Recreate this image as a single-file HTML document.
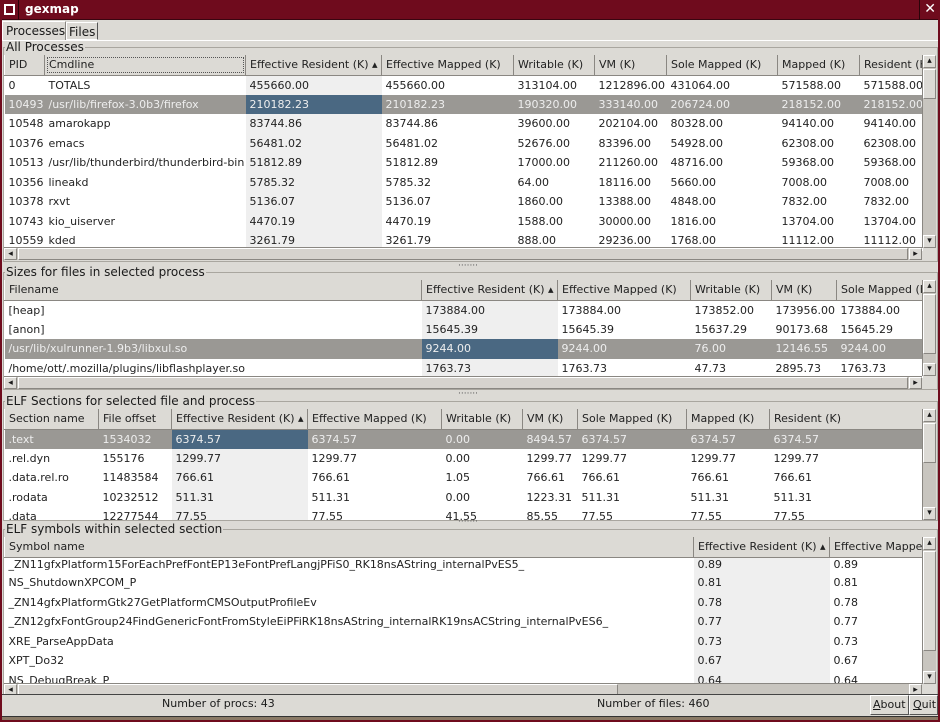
<!DOCTYPE html>
<html><head><meta charset="utf-8"><style>
*{box-sizing:border-box;margin:0;padding:0}
body{width:940px;height:722px;background:#dcdad5;font-family:"DejaVu Sans","Liberation Sans",sans-serif;font-size:11px;color:#1a1a1a;position:relative;overflow:hidden}
.abs{position:absolute}
.title{left:0;top:0;width:940px;height:20px;background:#6f0b1d;color:#fff;font-weight:bold;font-size:12px;border-bottom:1px solid #3a0510}
.frame{left:0;top:0;width:940px;height:722px;border:2px solid #6f0b1d;border-top:none;pointer-events:none}
.grp{border:1px solid #a9a69f;}
.lbl{background:#dcdad5;padding:0 1px;line-height:12px}
table{border-collapse:collapse;table-layout:fixed;position:absolute;background:#fff}
td{height:19.5px;padding:0 0 0 4px;white-space:nowrap;overflow:hidden;color:#222}
th{height:20px;font-weight:normal;text-align:left;padding:0 0 0 4px;white-space:nowrap;overflow:hidden;background:#dcdad5;border-left:1px solid #fff;border-right:1px solid #8a8782;border-bottom:1px solid #8a8782;color:#222}
.s{background:#efefef}
tr.sel td{background:#9a9894;color:#eee}
tr.sel td.s{background:#4a6882}
tr.first td{height:16px;vertical-align:top;line-height:13px}
.vs{background:#c8c5bf;border-left:1px solid #8a8782}
.hs{background:#c8c5bf;border-top:1px solid #8a8782}
.btn{background:#dcdad5;border:1px solid #8a8782;border-top-color:#fff;border-left-color:#fff;font-size:9px;text-align:center;line-height:10px}
.dots{font-size:9px;letter-spacing:0;color:#555;line-height:6px}
</style></head><body>
<div class="abs title"><span class="abs" style="left:4px;top:4px;width:11px;height:11px;border:2px solid #fff"></span><span class="abs" style="left:18px;top:0;height:20px;border-left:1px solid #2a0309"></span><span class="abs" style="left:25px;top:2px">gexmap</span><span class="abs" style="right:4px;top:1px;font-size:14px">✕</span><span class="abs" style="right:20px;top:0;height:20px;border-left:1px solid #2a0309"></span></div>

<!-- tabs -->
<div class="abs" style="left:2px;top:21px;width:64px;height:20px;border:1px solid #fff;border-bottom:none;border-right:1px solid #8a8782;padding:2px 3px;font-size:12px">Processes</div>
<div class="abs" style="left:66px;top:22px;width:32px;height:18px;border:1px solid #fff;border-right:1px solid #555;padding:2px 2px;font-size:12px">Files</div>
<div class="abs" style="left:2px;top:40px;width:936px;border-top:1px solid #fff"></div>

<!-- Group 1 -->
<div class="abs grp" style="left:3px;top:47px;width:935px;height:215px"></div>
<div class="abs lbl" style="left:5px;top:41px;font-size:12px">All Processes</div>
<table style="left:4px;top:55px;width:918px">
<colgroup><col style="width:40px"><col style="width:201px"><col style="width:136px"><col style="width:132px"><col style="width:81px"><col style="width:72px"><col style="width:111px"><col style="width:82px"><col style="width:63px"></colgroup>
<tr><th>PID</th><th style="outline:1px dotted #555;outline-offset:-3px">Cmdline</th><th>Effective Resident (K) ▴</th><th>Effective Mapped (K)</th><th>Writable (K)</th><th>VM (K)</th><th>Sole Mapped (K)</th><th>Mapped (K)</th><th>Resident (K)</th></tr>
<tr><td>0</td><td>TOTALS</td><td class="s">455660.00</td><td>455660.00</td><td>313104.00</td><td>1212896.00</td><td>431064.00</td><td>571588.00</td><td>571588.00</td></tr>
<tr class="sel"><td>10493</td><td>/usr/lib/firefox-3.0b3/firefox</td><td class="s">210182.23</td><td>210182.23</td><td>190320.00</td><td>333140.00</td><td>206724.00</td><td>218152.00</td><td>218152.00</td></tr>
<tr><td>10548</td><td>amarokapp</td><td class="s">83744.86</td><td>83744.86</td><td>39600.00</td><td>202104.00</td><td>80328.00</td><td>94140.00</td><td>94140.00</td></tr>
<tr><td>10376</td><td>emacs</td><td class="s">56481.02</td><td>56481.02</td><td>52676.00</td><td>83396.00</td><td>54928.00</td><td>62308.00</td><td>62308.00</td></tr>
<tr><td>10513</td><td>/usr/lib/thunderbird/thunderbird-bin</td><td class="s">51812.89</td><td>51812.89</td><td>17000.00</td><td>211260.00</td><td>48716.00</td><td>59368.00</td><td>59368.00</td></tr>
<tr><td>10356</td><td>lineakd</td><td class="s">5785.32</td><td>5785.32</td><td>64.00</td><td>18116.00</td><td>5660.00</td><td>7008.00</td><td>7008.00</td></tr>
<tr><td>10378</td><td>rxvt</td><td class="s">5136.07</td><td>5136.07</td><td>1860.00</td><td>13388.00</td><td>4848.00</td><td>7832.00</td><td>7832.00</td></tr>
<tr><td>10743</td><td>kio_uiserver</td><td class="s">4470.19</td><td>4470.19</td><td>1588.00</td><td>30000.00</td><td>1816.00</td><td>13704.00</td><td>13704.00</td></tr>
<tr><td>10559</td><td>kded</td><td class="s">3261.79</td><td>3261.79</td><td>888.00</td><td>29236.00</td><td>1768.00</td><td>11112.00</td><td>11112.00</td></tr>
</table>
<div class="abs vs" style="left:922px;top:55px;width:14px;height:193px"><div class="abs btn" style="left:0;top:0;width:13px;height:13px">▴</div><div class="abs btn" style="left:0;top:14px;width:13px;height:30px"></div><div class="abs btn" style="left:0;bottom:0;width:13px;height:13px">▾</div></div>
<div class="abs hs" style="left:4px;top:247px;width:918px;height:13px"><div class="abs btn" style="left:0;top:0;width:13px;height:12px">◂</div><div class="abs btn" style="left:14px;top:0;width:890px;height:12px;background:#d6d3ce"></div><div class="abs btn" style="right:0;top:0;width:13px;height:12px">▸</div></div>
<div class="abs dots" style="left:458px;top:263px">·······</div>

<!-- Group 2 -->
<div class="abs grp" style="left:3px;top:272px;width:935px;height:118px"></div>
<div class="abs lbl" style="left:5px;top:266px;font-size:12px">Sizes for files in selected process</div>
<table style="left:4px;top:280px;width:918px">
<colgroup><col style="width:417px"><col style="width:136px"><col style="width:133px"><col style="width:81px"><col style="width:65px"><col style="width:86px"></colgroup>
<tr><th>Filename</th><th>Effective Resident (K) ▴</th><th>Effective Mapped (K)</th><th>Writable (K)</th><th>VM (K)</th><th>Sole Mapped (K)</th></tr>
<tr><td>[heap]</td><td class="s">173884.00</td><td>173884.00</td><td>173852.00</td><td>173956.00</td><td>173884.00</td></tr>
<tr><td>[anon]</td><td class="s">15645.39</td><td>15645.39</td><td>15637.29</td><td>90173.68</td><td>15645.29</td></tr>
<tr class="sel"><td>/usr/lib/xulrunner-1.9b3/libxul.so</td><td class="s">9244.00</td><td>9244.00</td><td>76.00</td><td>12146.55</td><td>9244.00</td></tr>
<tr><td>/home/ott/.mozilla/plugins/libflashplayer.so</td><td class="s">1763.73</td><td>1763.73</td><td>47.73</td><td>2895.73</td><td>1763.73</td></tr>
</table>
<div class="abs vs" style="left:922px;top:280px;width:14px;height:96px"><div class="abs btn" style="left:0;top:0;width:13px;height:13px">▴</div><div class="abs btn" style="left:0;top:14px;width:13px;height:60px"></div><div class="abs btn" style="left:0;bottom:0;width:13px;height:13px">▾</div></div>
<div class="abs hs" style="left:4px;top:376px;width:918px;height:13px"><div class="abs btn" style="left:0;top:0;width:13px;height:12px">◂</div><div class="abs btn" style="left:14px;top:0;width:890px;height:12px;background:#d6d3ce"></div><div class="abs btn" style="right:0;top:0;width:13px;height:12px">▸</div></div>
<div class="abs dots" style="left:458px;top:391px">·······</div>

<!-- Group 3 -->
<div class="abs grp" style="left:3px;top:401px;width:935px;height:120px"></div>
<div class="abs lbl" style="left:5px;top:395px;font-size:12px">ELF Sections for selected file and process</div>
<div class="abs" style="left:4px;top:409px;width:918px;height:111px;overflow:hidden">
<table style="left:0;top:0;width:918px">
<colgroup><col style="width:94px"><col style="width:73px"><col style="width:136px"><col style="width:134px"><col style="width:81px"><col style="width:55px"><col style="width:109px"><col style="width:83px"><col style="width:153px"></colgroup>
<tr><th>Section name</th><th>File offset</th><th>Effective Resident (K) ▴</th><th>Effective Mapped (K)</th><th>Writable (K)</th><th>VM (K)</th><th>Sole Mapped (K)</th><th>Mapped (K)</th><th>Resident (K)</th></tr>
<tr class="sel"><td>.text</td><td>1534032</td><td class="s">6374.57</td><td>6374.57</td><td>0.00</td><td>8494.57</td><td>6374.57</td><td>6374.57</td><td>6374.57</td></tr>
<tr><td>.rel.dyn</td><td>155176</td><td class="s">1299.77</td><td>1299.77</td><td>0.00</td><td>1299.77</td><td>1299.77</td><td>1299.77</td><td>1299.77</td></tr>
<tr><td>.data.rel.ro</td><td>11483584</td><td class="s">766.61</td><td>766.61</td><td>1.05</td><td>766.61</td><td>766.61</td><td>766.61</td><td>766.61</td></tr>
<tr><td>.rodata</td><td>10232512</td><td class="s">511.31</td><td>511.31</td><td>0.00</td><td>1223.31</td><td>511.31</td><td>511.31</td><td>511.31</td></tr>
<tr><td>.data</td><td>12277544</td><td class="s">77.55</td><td>77.55</td><td>41.55</td><td>85.55</td><td>77.55</td><td>77.55</td><td>77.55</td></tr>
</table></div>
<div class="abs vs" style="left:922px;top:409px;width:14px;height:111px"><div class="abs btn" style="left:0;top:0;width:13px;height:13px">▴</div><div class="abs btn" style="left:0;top:14px;width:13px;height:40px"></div><div class="abs btn" style="left:0;bottom:0;width:13px;height:13px">▾</div></div>
<div class="abs dots" style="left:458px;top:519px">·······</div>

<!-- Group 4 -->
<div class="abs grp" style="left:3px;top:529px;width:935px;height:166px"></div>
<div class="abs lbl" style="left:5px;top:523px;font-size:12px">ELF symbols within selected section</div>
<div class="abs" style="left:4px;top:537px;width:918px;height:147px;overflow:hidden">
<table style="left:0;top:0;width:918px">
<colgroup><col style="width:689px"><col style="width:136px"><col style="width:93px"></colgroup>
<tr><th>Symbol name</th><th>Effective Resident (K) ▴</th><th>Effective Mapped (K)</th></tr>
<tr class="first"><td>_ZN11gfxPlatform15ForEachPrefFontEP13eFontPrefLangjPFiS0_RK18nsAString_internalPvES5_</td><td class="s">0.89</td><td>0.89</td></tr>
<tr><td>NS_ShutdownXPCOM_P</td><td class="s">0.81</td><td>0.81</td></tr>
<tr><td>_ZN14gfxPlatformGtk27GetPlatformCMSOutputProfileEv</td><td class="s">0.78</td><td>0.78</td></tr>
<tr><td>_ZN12gfxFontGroup24FindGenericFontFromStyleEiPFiRK18nsAString_internalRK19nsACString_internalPvES6_</td><td class="s">0.77</td><td>0.77</td></tr>
<tr><td>XRE_ParseAppData</td><td class="s">0.73</td><td>0.73</td></tr>
<tr><td>XPT_Do32</td><td class="s">0.67</td><td>0.67</td></tr>
<tr><td>NS_DebugBreak_P</td><td class="s">0.64</td><td>0.64</td></tr>
</table></div>
<div class="abs vs" style="left:922px;top:537px;width:14px;height:147px"><div class="abs btn" style="left:0;top:0;width:13px;height:13px">▴</div><div class="abs btn" style="left:0;top:14px;width:13px;height:100px"></div><div class="abs btn" style="left:0;bottom:0;width:13px;height:13px">▾</div></div>
<div class="abs hs" style="left:4px;top:683px;width:918px;height:12px"><div class="abs btn" style="left:0;top:0;width:13px;height:11px">◂</div><div class="abs btn" style="left:14px;top:0;width:600px;height:11px;background:#d6d3ce"></div><div class="abs btn" style="right:0;top:0;width:13px;height:11px">▸</div></div>

<!-- status -->
<div class="abs" style="left:2px;top:694px;width:936px;border-top:1px solid #444"></div>
<div class="abs" style="left:162px;top:697px;font-size:11px">Number of procs: 43</div>
<div class="abs" style="left:597px;top:697px;font-size:11px">Number of files: 460</div>
<div class="abs" style="left:870px;top:695px;width:39px;height:20px;border:1px solid #fff;border-right-color:#555;border-bottom-color:#555;padding:2px 2px;font-size:11px"><u>A</u>bout</div>
<div class="abs" style="left:909px;top:695px;width:29px;height:20px;border:1px solid #fff;border-right-color:#555;border-bottom-color:#555;padding:2px 3px;font-size:11px"><u>Q</u>uit</div>
<div class="abs" style="left:0;top:716px;width:940px;height:6px;background:#8a7a66;border-top:1px solid #333"></div>
<div class="abs frame"></div>
</body></html>
